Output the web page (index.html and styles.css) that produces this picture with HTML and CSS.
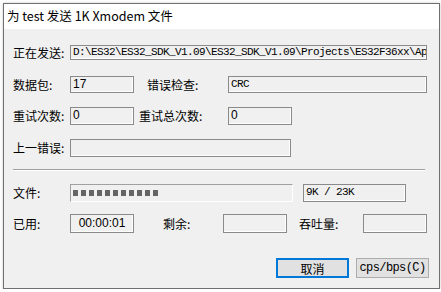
FILE: index.html
```html
<!doctype html>
<html lang="zh-CN">
<head>
  <meta charset="UTF-8">
  <meta name="viewport" content="width=device-width, initial-scale=1.0">

  <title>Xmodem 发送</title>

  <link rel="stylesheet" href="styles.css">
</head>

<body>
  <div class="window">
    <div class="titlebar">为 test 发送 1K Xmodem 文件</div>

    <div class="content">
      <div class="row row-1">
        <span class="label">正在发送:</span>
        <div class="field mono w-path">D:\ES32\ES32_SDK_V1.09\ES32_SDK_V1.09\Projects\ES32F36xx\Ap</div>
      </div>

      <div class="row row-2">
        <span class="label">数据包:</span>
        <div class="field w-small">17</div>
        <span class="label label-check">错误检查:</span>
        <div class="field mono w-crc">CRC</div>
      </div>

      <div class="row row-3">
        <span class="label">重试次数:</span>
        <div class="field w-small">0</div>
        <span class="label label-total">重试总次数:</span>
        <div class="field w-small">0</div>
      </div>

      <div class="row row-4">
        <span class="label">上一错误:</span>
        <div class="field w-error"></div>
      </div>

      <hr class="separator">

      <div class="row row-5">
        <span class="label">文件:</span>
        <div class="progress">
          <div class="progress-fill"></div>
        </div>
        <div class="field mono w-size">9K / 23K</div>
      </div>

      <div class="row row-6">
        <span class="label">已用:</span>
        <div class="field w-small center">00:00:01</div>
        <span class="label label-left">剩余:</span>
        <div class="field w-small"></div>
        <span class="label label-rate">吞吐量:</span>
        <div class="field w-small"></div>
      </div>

      <div class="buttons">
        <button class="btn btn-default">取消</button>
        <button class="btn mono">cps/bps(C)</button>
      </div>
    </div>
  </div>
</body>
</html>
```

FILE: styles.css
```css
*{
  box-sizing: border-box;
}

body{
  margin: 0;
  background-color: #fff;
  font-family: "Noto Sans CJK SC", "Liberation Sans", sans-serif;
  font-size: 12px;
  color: #000;
}

.window{
  margin: 3px 0 0 3px;
  width: 437px;
  height: 286px;
  border: 1px solid #6f6f6f;
  background-color: #f0f0f0;
  box-shadow: 0 0 3px rgba(0, 0, 0, .2);
}

.titlebar{
  height: 25px;
  padding-left: 3px;
  line-height: 23px;
  font-size: 12.5px;
  background-color: #fff;
}

.content{
  padding-left: 9px;
}

.row{
  display: flex;
  align-items: center;
}

.row-1{ margin-top: 16px; height: 15px; }
.row-2{ margin-top: 16px; height: 17px; }
.row-3{ margin-top: 14px; height: 18px; }
.row-4{ margin-top: 14px; height: 18px; }
.row-5{ margin-top: 13px; height: 18px; }
.row-6{ margin-top: 12px; height: 19px; }

.label{
  flex: none;
  width: 57px;
  line-height: 1;
  white-space: nowrap;
}

.label-check{
  margin-left: 13px;
  width: 81px;
}

.label-total{
  margin-left: 5px;
  width: 89px;
}

.label-left{
  margin-left: 29px;
  width: 60px;
}

.label-rate{
  margin-left: 12px;
  width: 64px;
}

.field{
  flex: none;
  height: 100%;
  padding: 0 2px;
  overflow: hidden;
  border: 1px solid #8a8a8a;
  box-shadow: inset -1px -1px 0 #fff;
  font-family: "Liberation Sans", sans-serif;
  font-size: 12px;
  line-height: 15px;
  white-space: nowrap;
}

.mono{
  font-family: "Liberation Mono", monospace;
  font-size: 11px;
  letter-spacing: -.6px;
}

.row-1 .field{
  line-height: 13px;
}

.center{
  text-align: center;
  line-height: 16px;
}

.w-path{ width: 357px; }
.w-small{ width: 64px; }
.w-crc{ width: 199px; }
.w-error{ width: 221px; }
.w-size{ width: 103px; margin-left: 10px; }

.separator{
  margin: 12px 0 0 0;
  width: 412px;
  height: 2px;
  border: 0;
  border-top: 1px solid #a0a0a0;
  border-bottom: 1px solid #fff;
}

.progress{
  flex: none;
  width: 223px;
  height: 18px;
  padding: 5px 0 0 2px;
  border-top: 1px solid #a0a0a0;
  border-left: 1px solid #a0a0a0;
  border-bottom: 1px solid #fff;
  border-right: 1px solid #fff;
}

.progress-fill{
  width: 88px;
  height: 6px;
  background: repeating-linear-gradient(90deg, #646464 0 5px, transparent 5px 8px);
}

.buttons{
  display: flex;
  justify-content: flex-end;
  gap: 7px;
  margin-top: 25px;
  padding-right: 10px;
}

.btn{
  width: 73px;
  height: 20px;
  padding: 0;
  border: 1px solid #adadad;
  background-color: #e1e1e1;
  font-size: 12px;
  color: #000;
}

.btn-default{
  border: 2px solid #0078d7;
  font-family: "Noto Sans CJK SC", sans-serif;
}
```
